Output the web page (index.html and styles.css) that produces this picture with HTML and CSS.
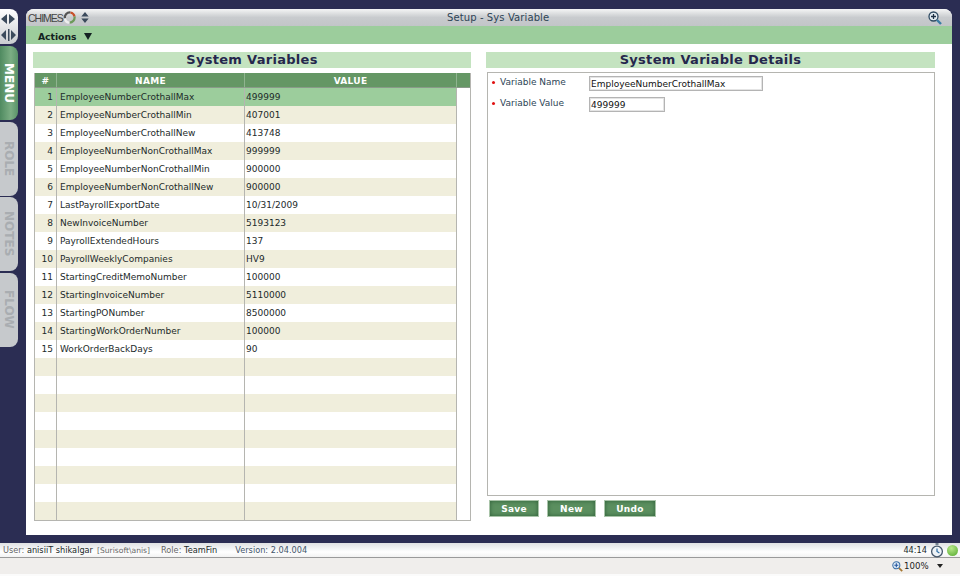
FILE: index.html
```html
<!DOCTYPE html>
<html lang="en">
<head>
    <meta charset="UTF-8">
    <title>Setup - Sys Variable</title>
    <link rel="stylesheet" href="styles.css">
</head>
<body>
    <div class="desk">
        <!-- Side tabs -->
        <div class="side">
            <div class="resizer">
                <svg width="18" height="35" viewBox="0 0 18 35">
                    <path d="M1 10 L7 5 V15 Z M9 5 V15 L15 10 Z" fill="#3b4a5c"/>
                    <path d="M1 26 L6 21 V31 Z M8 20 H9.5 V32 H8 Z M11 21 V31 L16 26 Z" fill="#3b4a5c"/>
                </svg>
            </div>
            <div class="tab tab-on"><span>MENU</span></div>
            <div class="tab"><span>ROLE</span></div>
            <div class="tab"><span>NOTES</span></div>
            <div class="tab"><span>FLOW</span></div>
        </div>

        <div class="main">
            <div class="titlebar">
                <div class="brand">
                    <span class="brand-name">CHIMES</span>
                    <svg width="13" height="13" viewBox="0 0 14 14">
                        <path d="M2 8 A5.5 5.5 0 0 1 8 1.6" fill="none" stroke="#555" stroke-width="2.4"/>
                        <path d="M8 1.6 A5.5 5.5 0 0 1 12.4 6" fill="none" stroke="#c8502a" stroke-width="2.4"/>
                        <path d="M12.4 6 A5.5 5.5 0 0 1 7 12.5" fill="none" stroke="#6d9a5a" stroke-width="2.4"/>
                        <path d="M7 12.5 A5.5 5.5 0 0 1 2 8" fill="none" stroke="#eee" stroke-width="2.4"/>
                    </svg>
                    <svg class="updown" width="8" height="11" viewBox="0 0 8 12">
                        <path d="M4 0 L8 5 H0 Z M0 7 H8 L4 12 Z" fill="#3b4a5c"/>
                    </svg>
                </div>
                <div class="page-title">Setup - Sys Variable</div>
                <svg class="zoom-icon" width="14" height="14" viewBox="0 0 14 14">
                    <circle cx="5.5" cy="5.5" r="4.5" fill="#e4eef4" stroke="#2e4a62" stroke-width="1.3"/>
                    <path d="M3 5.5 H8 M5.5 3 V8" stroke="#1c3044" stroke-width="1.3"/>
                    <path d="M9 9 L13 13" stroke="#3a7ca5" stroke-width="2.4"/>
                </svg>
            </div>
            <div class="actionbar">Actions <span class="caret"></span></div>

            <div class="content">
                <div class="left">
                    <h2>System Variables</h2>
                    <div class="grid-wrap">
                        <table class="grid">
                            <thead>
                                <tr><th class="c-num">#</th><th class="c-name">NAME</th><th class="c-val">VALUE</th><th class="c-scroll"></th></tr>
                            </thead>
                            <tbody>
                                <tr class="sel"><td class="c-num">1</td><td>EmployeeNumberCrothallMax</td><td>499999</td><td class="c-scroll"></td></tr>
                                <tr class="alt"><td class="c-num">2</td><td>EmployeeNumberCrothallMin</td><td>407001</td><td class="c-scroll"></td></tr>
                                <tr><td class="c-num">3</td><td>EmployeeNumberCrothallNew</td><td>413748</td><td class="c-scroll"></td></tr>
                                <tr class="alt"><td class="c-num">4</td><td>EmployeeNumberNonCrothallMax</td><td>999999</td><td class="c-scroll"></td></tr>
                                <tr><td class="c-num">5</td><td>EmployeeNumberNonCrothallMin</td><td>900000</td><td class="c-scroll"></td></tr>
                                <tr class="alt"><td class="c-num">6</td><td>EmployeeNumberNonCrothallNew</td><td>900000</td><td class="c-scroll"></td></tr>
                                <tr><td class="c-num">7</td><td>LastPayrollExportDate</td><td>10/31/2009</td><td class="c-scroll"></td></tr>
                                <tr class="alt"><td class="c-num">8</td><td>NewInvoiceNumber</td><td>5193123</td><td class="c-scroll"></td></tr>
                                <tr><td class="c-num">9</td><td>PayrollExtendedHours</td><td>137</td><td class="c-scroll"></td></tr>
                                <tr class="alt"><td class="c-num">10</td><td>PayrollWeeklyCompanies</td><td>HV9</td><td class="c-scroll"></td></tr>
                                <tr><td class="c-num">11</td><td>StartingCreditMemoNumber</td><td>100000</td><td class="c-scroll"></td></tr>
                                <tr class="alt"><td class="c-num">12</td><td>StartingInvoiceNumber</td><td>5110000</td><td class="c-scroll"></td></tr>
                                <tr><td class="c-num">13</td><td>StartingPONumber</td><td>8500000</td><td class="c-scroll"></td></tr>
                                <tr class="alt"><td class="c-num">14</td><td>StartingWorkOrderNumber</td><td>100000</td><td class="c-scroll"></td></tr>
                                <tr><td class="c-num">15</td><td>WorkOrderBackDays</td><td>90</td><td class="c-scroll"></td></tr>
                                <tr class="alt"><td class="c-num"></td><td></td><td></td><td class="c-scroll"></td></tr>
                                <tr><td class="c-num"></td><td></td><td></td><td class="c-scroll"></td></tr>
                                <tr class="alt"><td class="c-num"></td><td></td><td></td><td class="c-scroll"></td></tr>
                                <tr><td class="c-num"></td><td></td><td></td><td class="c-scroll"></td></tr>
                                <tr class="alt"><td class="c-num"></td><td></td><td></td><td class="c-scroll"></td></tr>
                                <tr><td class="c-num"></td><td></td><td></td><td class="c-scroll"></td></tr>
                                <tr class="alt"><td class="c-num"></td><td></td><td></td><td class="c-scroll"></td></tr>
                                <tr><td class="c-num"></td><td></td><td></td><td class="c-scroll"></td></tr>
                                <tr class="alt"><td class="c-num"></td><td></td><td></td><td class="c-scroll"></td></tr>
                            </tbody>
                        </table>
                    </div>
                </div>

                <div class="right">
                    <h2>System Variable Details</h2>
                    <div class="details">
                        <div class="field">
                            <label><i class="req"></i>Variable Name</label>
                            <input class="input-long" type="text" value="EmployeeNumberCrothallMax">
                        </div>
                        <div class="field">
                            <label><i class="req"></i>Variable Value</label>
                            <input class="input-short" type="text" value="499999">
                        </div>
                    </div>
                    <div class="buttons">
                        <button class="btn-save">Save</button>
                        <button class="btn-new">New</button>
                        <button class="btn-undo">Undo</button>
                    </div>
                </div>
            </div>
        </div>
    </div>

    <div class="status">
        <span class="s-user">User: <b>anisiiT shikalgar</b></span>
        <span class="s-domain">[Surisoft\anis]</span>
        <span class="s-role">Role: <b>TeamFin</b></span>
        <span class="s-version">Version: 2.04.004</span>
        <span class="s-time">44:14</span>
        <svg width="14" height="15" viewBox="0 0 14 15">
            <path d="M5.5 1 H8.5" stroke="#44566a" stroke-width="1.4"/>
            <circle cx="7" cy="8.5" r="5.4" fill="#eef3f7" stroke="#44566a" stroke-width="1.3"/>
            <path d="M7 5.5 V8.5 L9.4 10" fill="none" stroke="#2f6fa5" stroke-width="1.2"/>
        </svg>
        <i class="dot"></i>
    </div>

    <div class="browserbar">
        <svg width="11" height="11" viewBox="0 0 14 14">
            <circle cx="5.5" cy="5.5" r="4.5" fill="#dce9f5" stroke="#3a6ea5" stroke-width="1.3"/>
            <path d="M3 5.5 H8 M5.5 3 V8" stroke="#2456a0" stroke-width="1.4"/>
            <path d="M9 9 L13 13" stroke="#a5752e" stroke-width="2.2"/>
        </svg>
        <span class="zoom-val">100%</span>
        <span class="zoom-caret"></span>
    </div>
</body>
</html>
```

FILE: styles.css
```css
* {
    box-sizing: border-box;
}
html, body {
    margin: 0;
    height: 576px;
    overflow: hidden;
}
body {
    background-color: #2b2d53;
    font-family: "DejaVu Sans", Verdana, sans-serif;
    font-size: 9px;
    color: #1c2a2a;
    display: flex;
    flex-direction: column;
}
.desk {
    height: 543px;
    padding: 9px 0 8px;
    display: flex;
}

/* side tabs */
.side {
    width: 26px;
    flex-shrink: 0;
}
.resizer {
    width: 18px;
    height: 35px;
    margin-bottom: 2px;
    background: linear-gradient(#fff, #c9ccd0);
    border-radius: 0 8px 8px 0;
}
.resizer svg {
    display: block;
}
.tab {
    width: 18px;
    height: 74px;
    margin-bottom: 1.5px;
    background-color: #c6c9cc;
    border-radius: 0 8px 8px 0;
    display: flex;
    justify-content: center;
    align-items: center;
}
.tab span {
    writing-mode: vertical-rl;
    font: bold 12px "DejaVu Sans", Verdana, sans-serif;
    color: #a9adb1;
}
.tab-on {
    background: linear-gradient(90deg, #4f8a60, #7cae84 60%, #5a9369);
}
.tab-on span {
    color: #fff;
}

/* main window */
.main {
    width: 926px;
    background-color: #fff;
    border-radius: 8px 8px 0 0;
    overflow: hidden;
    display: flex;
    flex-direction: column;
}
.titlebar {
    height: 17px;
    background: linear-gradient(#f4f5f5, #c8cbce 50%, #c2c5c8);
    position: relative;
    display: flex;
    align-items: center;
    padding-left: 2px;
}
.brand {
    display: flex;
    align-items: center;
    width: 320px;
    color: #444;
}
.brand-name {
    font: 10.5px "Liberation Sans", Arial, sans-serif;
    letter-spacing: -1px;
}
.updown {
    margin-left: 5px;
}
.page-title {
    position: absolute;
    left: 421px;
    top: 3px;
    font-size: 10px;
    color: #2d4456;
    letter-spacing: 0.1px;
}
.zoom-icon {
    position: absolute;
    right: 10px;
    top: 2px;
}
.actionbar {
    height: 18px;
    background-color: #9ccd9c;
    padding: 2px 0 0 12px;
    font-weight: bold;
    font-size: 9.2px;
    line-height: 18px;
    color: #142222;
}
.caret {
    display: inline-block;
    width: 0;
    height: 0;
    margin-left: 4px;
    border-left: 4px solid transparent;
    border-right: 4px solid transparent;
    border-top: 7px solid #142222;
}
.content {
    flex: 1;
    display: flex;
    padding: 8px 17px 0 7px;
    gap: 15px;
}
h2 {
    margin: 0;
    height: 16px;
    background-color: #c4e3c0;
    color: #25274d;
    font-size: 13px;
    line-height: 16px;
    text-align: center;
    letter-spacing: 0.3px;
}

/* left grid */
.left {
    width: 438px;
}
.grid-wrap {
    margin: 5px 0 0 1px;
    width: 437px;
    border: 1px solid #b5b5b0;
    border-top: 0;
}
.grid {
    width: 435px;
    border-collapse: separate;
    border-spacing: 0;
    table-layout: fixed;
}
.grid th {
    height: 15px;
    padding: 2px 0 0;
    line-height: 12px;
    background-color: #659765;
    color: #fff;
    font-size: 9px;
    letter-spacing: 0.3px;
    border-right: 1px solid #8fb48f;
    border-bottom: 1px solid #8a9a8a;
}
.grid td {
    height: 18px;
    padding: 0 0 0 3px;
    border-right: 1px solid #b5b5b0;
    white-space: nowrap;
    overflow: hidden;
}
.grid td:nth-child(3) {
    padding-left: 1px;
}
.grid td.c-num {
    padding: 0 3px 0 0;
    text-align: right;
}
.c-num {
    width: 22px;
}
.c-name {
    width: 188px;
}
.c-val {
    width: 212px;
}
.c-scroll {
    width: 13px;
    border-right: 0 !important;
}
.grid tr.alt td {
    background-color: #f0eedc;
}
.grid tr.sel td {
    background-color: #9ccd9c;
}
.grid tbody td.c-scroll {
    background-color: #fff;
}

/* right details */
.right {
    width: 449px;
}
.details {
    margin: 4px 0 0 1px;
    height: 424px;
    border: 1px solid #b5b5b0;
    padding: 3px 0 0 3px;
}
.field {
    display: flex;
    align-items: flex-start;
    height: 21px;
    color: #2d4456;
}
.field label {
    width: 98px;
    padding-top: 1px;
}
.req {
    display: inline-block;
    width: 3px;
    height: 3px;
    background-color: #e01010;
    border-radius: 50%;
    margin: 0 5px 1px 1px;
}
.field input {
    height: 15px;
    padding: 0 2px 0 1px;
    font: 9px "DejaVu Sans", Verdana, sans-serif;
    color: #111;
    border: 1px solid #b4b4b4;
    box-shadow: inset 0 0 0 1px #e4e4e4;
    outline: 0;
}
.input-long {
    width: 174px;
}
.input-short {
    width: 76px;
}
.buttons {
    display: flex;
    gap: 8px;
    margin: 4px 0 0 3px;
}
.buttons button {
    height: 17px;
    padding: 0;
    background: #5b8f5f;
    box-shadow: inset 0 0 4px #2f5f38;
    color: #fff;
    border: 1px solid #a9c4a9;
    font: bold 9px "DejaVu Sans", Verdana, sans-serif;
    letter-spacing: 0.3px;
}
.btn-save {
    width: 50px;
}
.btn-new {
    width: 49px;
}
.btn-undo {
    width: 52px;
}

/* status */
.status {
    height: 15px;
    padding: 2px 2px 0 3px;
    background: linear-gradient(#dfe1e3, #fff 9px, #f2f2f2);
    border-bottom: 1px solid #9a9a9a;
    display: flex;
    align-items: flex-start;
    color: #666;
    font-size: 8.2px;
    line-height: 11px;
}
.status b {
    font-weight: normal;
    color: #1c2a2a;
}
.s-domain {
    margin-left: 4px;
    font-size: 7.6px;
}
.s-role {
    margin-left: 11px;
}
.s-version {
    margin-left: 18px;
    color: #44566a;
}
.s-time {
    margin-left: auto;
    margin-right: 3px;
    color: #1c2a2a;
}
.status svg {
    margin-top: -2px;
    flex-shrink: 0;
}
.dot {
    width: 11px;
    height: 11px;
    margin: 0 0 0 3px;
    border-radius: 50%;
    background: radial-gradient(circle at 40% 30%, #b8e88a, #52a82c);
}
.browserbar {
    height: 18px;
    background-color: #f0eeec;
    border-bottom: 2px solid #fbfbfb;
    display: flex;
    align-items: center;
    justify-content: flex-end;
    padding-right: 17px;
    color: #222;
    font-size: 8.6px;
}
.zoom-val {
    margin-left: 1px;
    width: 33px;
}
.zoom-caret {
    width: 0;
    height: 0;
    border-left: 3.5px solid transparent;
    border-right: 3.5px solid transparent;
    border-top: 4px solid #222;
}
```
